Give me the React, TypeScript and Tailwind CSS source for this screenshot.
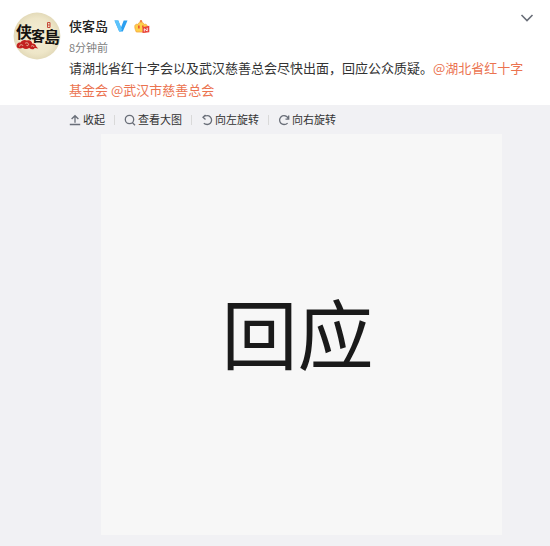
import { useState } from 'react'
import type { ReactNode } from 'react'

function Avatar() {
  return (
    <svg viewBox="0 0 48 48" className="h-12 w-12" role="img" aria-label="侠客岛">
      <defs>
        <radialGradient id="paper">
          <stop offset="0" stopColor="#f5eed6" />
          <stop offset="0.75" stopColor="#eee6c8" />
          <stop offset="1" stopColor="#e3dab9" />
        </radialGradient>
      </defs>
      <circle cx="24" cy="24" r="23.4" fill="url(#paper)" />
      {/* red cloud */}
      <path
        fill="#c3201f"
        d="M4 35.500c-1-3 .5-5 3.500-5 1-2 4-3.500 6.500-2 3-.8 5 .8 5.200 3 2.500-.3 3.800 1.500 4 3l2 2-3.500-.5c-1 2-3.500 1.500-5.500 0-2.500 1.500-4.500 1.300-6.500-.3-2 1.300-4 .8-5.700-.2z"
      />
      <path
        fill="none"
        stroke="#ece3c2"
        strokeWidth="0.7"
        d="M6.500 34.500c0-2 3-2.500 3.500-.5M12 31.500c1.500-1.500 4-.5 3.500 1.500-.5 1-2 .8-2 0M18 34.500c1-1.500 3-1 3 .5"
      />
      <g fontFamily="'Noto Sans CJK SC', sans-serif" fontWeight="700" fill="#15120f">
        <text x="3" y="26" fontSize="16">侠</text>
        <text x="18" y="29" fontSize="14">客</text>
        <text x="31" y="31" fontSize="16">島</text>
      </g>
      {/* seal */}
      <path fill="none" stroke="#c64a3a" strokeWidth="1" d="M34.500 10.500h2.500v5h-2.500zM34.500 13h2.500" />
    </svg>
  )
}

function Verified() {
  return (
    <svg viewBox="0 0 14 12" className="h-3 w-3.5" aria-hidden="true">
      <path fill="#2b9ff0" d="M0.500 0.500h3.800L7 7.400 9.700 0.500h3.800L8.800 11.500H5.200z" />
      <path fill="#5cc3fb" d="M0.500 0.500h3.800L8 9.500l-1.200 2H5.200z" />
    </svg>
  )
}

function Member() {
  return (
    <svg viewBox="0 0 16 15" className="h-[15px] w-4" aria-hidden="true">
      <circle cx="7" cy="2.200" r="1.200" fill="#f0843a" />
      <path
        fill="#fdd04a"
        stroke="#f5a33c"
        strokeWidth="0.8"
        d="M0.800 7.500c0-2 1.700-2.800 2.900-2C4.300 4 5.500 3.300 7 3.300s2.700.7 3.300 2.200c1.200-.8 3 0 3 2 0 2-.8 3.800-1.500 5.500H2.300C1.500 11.300.8 9.500.8 7.500z"
      />
      <path fill="#ee5a32" d="M4 6.500h1.700v3H4zM8 6.500h1.700v2H8z" />
      <path fill="#e8403a" d="M8.500 8.200L15.300 6.800v6.400l-6.800.8z" />
      <path fill="none" stroke="#fff" strokeWidth="0.9" d="M10.300 12.500v-2.700l2.900 2.200v-3.200" />
    </svg>
  )
}

const icons: Record<string, ReactNode> = {
  collapse: <path d="M0.800 10.500h10.400M6 8.700V1.800M2.600 5L6 1.700 9.400 5" />,
  zoom: (
    <>
      <circle cx="5.500" cy="5.500" r="4.200" />
      <path d="M8.500 8.700l2.500 2.500" />
    </>
  ),
  left: <path d="M4.500 1L2 3.300l2.500 2.300M1.800 3.200C3.300 2.200 4.700 1.700 6.200 1.700a4.400 4.400 0 1 1 0 8.800c-1.400 0-2.500-.4-3.400-1.200" />,
  right: <path d="M7.500 5.200h3.200V1.500M10.500 4.800C9.700 2.900 8 1.700 6 1.700a4.400 4.400 0 1 0 0 8.800c1.500 0 2.700-.5 3.600-1.400" />,
}

const tools = [
  { icon: 'collapse', label: '收起' },
  { icon: 'zoom', label: '查看大图' },
  { icon: 'left', label: '向左旋转' },
  { icon: 'right', label: '向右旋转' },
]

export default function App() {
  const [rotation, setRotation] = useState(0)

  const handleTool = (icon: string) => {
    if (icon === 'left') setRotation(rotation - 90)
    if (icon === 'right') setRotation(rotation + 90)
  }

  return (
    <article
      lang="zh-CN"
      className="flex min-h-screen flex-col bg-white font-['Noto_Sans_CJK_SC',sans-serif] text-[13px] text-[#333]"
    >
      {/* Post header and text */}
      <header className="flex gap-2 pt-3 pr-4 pb-1 pl-[13px]">
        <a href="#profile" className="h-12 w-12 shrink-0">
          <Avatar />
        </a>
        <div className="min-w-0 flex-1">
          <div className="flex items-center justify-between">
            <div className="flex h-7 items-center gap-1.5">
              <a href="#profile" className="font-medium text-[#222]">侠客岛</a>
              <Verified />
              <Member />
            </div>
            <button type="button" aria-label="更多" className="-mt-4">
              <svg viewBox="0 0 14 8" className="h-2 w-3.5" fill="none" stroke="#696e78" strokeWidth="1.6">
                <path d="M1.500 1l5.500 5.500L12.500 1" />
              </svg>
            </button>
          </div>
          <time className="block h-[17px] text-[11px] leading-[14px] text-[#808080]">8分钟前</time>
          <p className="leading-[22px]">
            请湖北省红十字会以及武汉慈善总会尽快出面，回应公众质疑。
            <a href="#hubei" className="text-[#eb7350]">@湖北省红十字基金会</a>{' '}
            <a href="#wuhan" className="text-[#eb7350]">@武汉市慈善总会</a>
          </p>
        </div>
      </header>

      {/* Expanded picture */}
      <section className="flex-1 bg-[#f1f1f4] pr-4 pb-[11px] pl-[69px]">
        <div className="flex h-[29px] items-center text-[11px]">
          {tools.map((tool, i) => (
            <div key={tool.icon} className="flex items-center">
              {i > 0 && <span className="mx-[9px] h-2.5 w-px bg-[#d9d9d9]" />}
              <button type="button" onClick={() => handleTool(tool.icon)} className="flex items-center gap-0.5">
                <svg viewBox="0 0 12 12" className="h-3 w-3" fill="none" stroke="#696e78" strokeWidth="1.3">
                  {icons[tool.icon]}
                </svg>
                {tool.label}
              </button>
            </div>
          ))}
        </div>
        <figure
          className="mx-auto flex aspect-square max-w-[401px] items-center justify-center bg-[#f7f7f7] pr-2 pb-2"
          style={{ transform: rotation ? `rotate(${rotation}deg)` : undefined }}
        >
          <span className="text-[76px] leading-none text-[#1a1a1a]">回应</span>
        </figure>
      </section>
    </article>
  )
}
